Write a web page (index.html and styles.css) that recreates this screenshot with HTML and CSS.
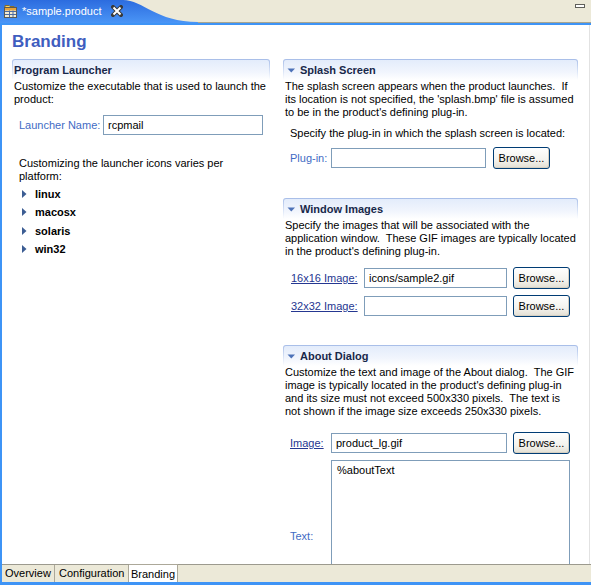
FILE: index.html
```html
<!DOCTYPE html>
<html>
<head>
<meta charset="utf-8">
<link rel="stylesheet" href="styles.css">
</head>
<body>
<div class="tabbar">
  <div class="tab">
    <svg class="tab-shape" width="205" height="23" viewBox="0 0 205 23">
      <defs>
        <linearGradient id="tg" x1="0" y1="0" x2="0" y2="1">
          <stop offset="0" stop-color="#2c6cdf"/>
          <stop offset="1" stop-color="#4a95f6"/>
        </linearGradient>
      </defs>
      <path d="M0 0 H123 C143 0 156 22 198 22 V23 H0 Z" fill="url(#tg)"/>
    </svg>
    <svg class="tab-icon" width="16" height="16" viewBox="0 0 16 16">
      <path d="M2 2.5 H6 L7 3.5 H11 V5 H2 Z" fill="#f7d56a" stroke="#8a6d2a" stroke-width="1"/>
      <rect x="1.5" y="4.5" width="12" height="10" fill="#f3ecd4" stroke="#5b5a55"/>
      <rect x="2" y="5" width="11" height="2.5" fill="#e9a43a"/>
      <path d="M2 8.5 H13 M2 11.5 H13 M6.5 7.5 V14 M10 7.5 V14" stroke="#4c6aa0" stroke-width="1"/>
    </svg>
    <span class="tab-label">*sample.product</span>
    <svg class="tab-close" width="12" height="12" viewBox="0 0 12 12">
      <path d="M2 2 L10 10 M10 2 L2 10" stroke="#3a3a3a" stroke-width="4" stroke-linecap="square"/>
      <path d="M2.5 2.5 L9.5 9.5 M9.5 2.5 L2.5 9.5" stroke="#ffffff" stroke-width="2"/>
    </svg>
  </div>
  <div class="minimize"></div>
</div>
<div class="editor">
  <div class="form">
    <h1 class="form-title">Branding</h1>
    <div class="columns">
      <div class="col col-left">
        <div class="section">
          <div class="sec-head"><div class="sec-head-inner">Program Launcher</div></div>
          <p class="desc">Customize the executable that is used to launch the<br>product:</p>
          <div class="row row-launcher">
            <span class="lbl lbl-launcher">Launcher Name:</span>
            <input class="field f-launcher" type="text" value="rcpmail">
          </div>
          <p class="desc desc-indent">Customizing the launcher icons varies per<br>platform:</p>
          <ul class="tree">
            <li class="tree-item"><svg class="tri-r" width="5" height="8" viewBox="0 0 5 8"><path d="M0 0 L4.5 4 L0 8 Z" fill="#3c5d93"/></svg>linux</li>
            <li class="tree-item"><svg class="tri-r" width="5" height="8" viewBox="0 0 5 8"><path d="M0 0 L4.5 4 L0 8 Z" fill="#3c5d93"/></svg>macosx</li>
            <li class="tree-item"><svg class="tri-r" width="5" height="8" viewBox="0 0 5 8"><path d="M0 0 L4.5 4 L0 8 Z" fill="#3c5d93"/></svg>solaris</li>
            <li class="tree-item"><svg class="tri-r" width="5" height="8" viewBox="0 0 5 8"><path d="M0 0 L4.5 4 L0 8 Z" fill="#3c5d93"/></svg>win32</li>
          </ul>
        </div>
      </div>
      <div class="col col-right">
        <div class="section sec-splash">
          <div class="sec-head"><div class="sec-head-inner"><svg class="tri-d" width="9" height="5" viewBox="0 0 9 5"><path d="M0.5 0.5 H8 L4.25 4.5 Z" fill="#4d72b8"/></svg>Splash Screen</div></div>
          <p class="desc">The splash screen appears when the product launches.&nbsp; If<br>its location is not specified, the 'splash.bmp' file is assumed<br>to be in the product's defining plug-in.</p>
          <p class="desc desc-specify">Specify the plug-in in which the splash screen is located:</p>
          <div class="row row-plugin">
            <span class="lbl lbl-short">Plug-in:</span>
            <input class="field f-plugin" type="text" value="">
            <button class="btn btn-plugin">Browse...</button>
          </div>
        </div>
        <div class="section sec-window">
          <div class="sec-head"><div class="sec-head-inner"><svg class="tri-d" width="9" height="5" viewBox="0 0 9 5"><path d="M0.5 0.5 H8 L4.25 4.5 Z" fill="#4d72b8"/></svg>Window Images</div></div>
          <p class="desc">Specify the images that will be associated with the<br>application window.&nbsp; These GIF images are typically located<br>in the product's defining plug-in.</p>
          <div class="row row-img16">
            <a class="link lbl-wide">16x16 Image:</a>
            <input class="field f-img" type="text" value="icons/sample2.gif">
            <button class="btn">Browse...</button>
          </div>
          <div class="row row-img32">
            <a class="link lbl-wide">32x32 Image:</a>
            <input class="field f-img" type="text" value="">
            <button class="btn">Browse...</button>
          </div>
        </div>
        <div class="section sec-about">
          <div class="sec-head"><div class="sec-head-inner"><svg class="tri-d" width="9" height="5" viewBox="0 0 9 5"><path d="M0.5 0.5 H8 L4.25 4.5 Z" fill="#4d72b8"/></svg>About Dialog</div></div>
          <p class="desc">Customize the text and image of the About dialog.&nbsp; The GIF<br>image is typically located in the product's defining plug-in<br>and its size must not exceed 500x330 pixels.&nbsp; The text is<br>not shown if the image size exceeds 250x330 pixels.</p>
          <div class="row row-image">
            <a class="link lbl-short">Image:</a>
            <input class="field f-about" type="text" value="product_lg.gif">
            <button class="btn">Browse...</button>
          </div>
          <div class="row row-text">
            <span class="lbl lbl-short">Text:</span>
            <textarea class="area">%aboutText</textarea>
          </div>
        </div>
      </div>
    </div>
  </div>
  <div class="pagetabs">
    <div class="ptab pt-overview">Overview</div>
    <div class="ptab pt-config">Configuration</div>
    <div class="ptab pt-branding sel">Branding</div>
  </div>
</div>
</body>
</html>
```

FILE: styles.css
```css
* { box-sizing: border-box; }
html, body { margin: 0; padding: 0; }
body {
  width: 591px;
  height: 585px;
  overflow: hidden;
  background: #ECE9D8;
  font-family: "Liberation Sans", Arial, sans-serif;
  font-size: 11px;
  color: #000;
}

/* top editor tab bar */
.tabbar {
  height: 23px;
  background: #ECE9D8;
  border-bottom: 1px solid #a9a58f;
  display: flex;
}
.tab {
  position: relative;
  width: 200px;
  height: 23px;
  display: flex;
  align-items: center;
  padding-left: 3px;
}
.tab-shape { position: absolute; left: 0; top: 0; }
.tab-icon { position: relative; margin-top: -2px; }
.tab-label {
  position: relative;
  color: #fff;
  margin-left: 3px;
  margin-top: -1px;
}
.tab-close { position: relative; margin-left: 9px; margin-top: -2px; }
.minimize {
  margin-left: auto;
  margin-right: 6px;
  margin-top: 4px;
  width: 10px;
  height: 4px;
  border: 1px solid #5f5f5a;
  background: #fff;
}

/* editor frame */
.editor {
  height: 562px;
  border-top: 2px solid #3e94f6;
  border-left: 2px solid #3e94f6;
  border-bottom: 3px solid #3e94f6;
  background: #fff;
  display: flex;
  flex-direction: column;
}
.form {
  height: 539px;
  overflow: hidden;
  background: #fff;
  padding-left: 10px;
  margin-right: 1px;
  border-right: 1px solid #e2e2e2;
}
.form-title {
  margin: 0;
  padding-top: 7px;
  height: 27px;
  font-size: 17px;
  line-height: 20px;
  font-weight: bold;
  color: #3f5ebf;
}
.columns {
  display: flex;
  gap: 13px;
  margin-top: 7px;
}
.col-left { width: 258px; }
.col-right { width: 295px; }

/* sections */
.sec-head {
  height: 21px;
  padding: 1px 1px 0;
  border-radius: 3px 3px 0 0;
  background: linear-gradient(#a7bde8, #dbe5f7 60%, #ffffff);
}
.sec-head-inner {
  height: 20px;
  border-radius: 2px 2px 0 0;
  background: linear-gradient(#e3ecfb, #f1f5fd 60%, #ffffff);
  display: flex;
  align-items: center;
  padding-left: 1px;
  font-weight: bold;
  color: #18284a;
}
.col-right .sec-head-inner { padding-left: 3px; }
.tri-d { margin-right: 4px; }
.desc {
  margin: 0;
  padding-left: 2px;
  line-height: 13px;
  white-space: nowrap;
}
.desc-indent { padding-left: 7px; margin-top: 21px; }
.desc-specify { padding-left: 7px; margin-top: 8px; }

.row {
  display: flex;
  align-items: center;
  height: 22px;
  padding-left: 7px;
}
.row-launcher { margin-top: 8px; }
.row-plugin { margin-top: 7px; }
.sec-window { margin-top: 29px; }
.row-img16 { margin-top: 9px; padding-left: 8px; }
.row-img32 { margin-top: 6px; padding-left: 8px; }
.sec-about { margin-top: 28px; }
.row-image { margin-top: 14px; }
.row-text { margin-top: 6px; height: 152px; }

.lbl { color: #3f6bc4; }
.link { color: #253791; text-decoration: underline; }
.lbl-launcher { width: 84px; }
.lbl-short { width: 41px; }
.lbl-wide { width: 73px; }

.field {
  height: 20px;
  border: 1px solid #7f9db9;
  background: #fff;
  padding: 0 4px;
  margin: 0;
  font-family: "Liberation Sans", Arial, sans-serif;
  font-size: 11px;
  color: #000;
  outline: none;
}
.f-launcher { width: 160px; }
.f-plugin { width: 155px; }
.f-img { width: 143px; }
.f-about { width: 176px; }

.btn {
  width: 57px;
  height: 22px;
  margin-left: 6px;
  padding: 0;
  border: 1px solid #003c74;
  border-radius: 3px;
  background: linear-gradient(#ffffff, #f4f3ee 60%, #e3dfd3);
  box-shadow: inset -1px -1px 0 #d6d0c2;
  font-family: "Liberation Sans", Arial, sans-serif;
  font-size: 11px;
  color: #000;
}
.btn-plugin { margin-left: 7px; }

.area {
  width: 239px;
  height: 152px;
  border: 1px solid #7f9db9;
  padding: 3px 5px;
  margin: 0;
  resize: none;
  font-family: "Liberation Sans", Arial, sans-serif;
  font-size: 11px;
  line-height: 13px;
  color: #000;
  overflow: hidden;
  outline: none;
}

/* tree */
.tree {
  list-style: none;
  margin: 2px 0 0;
  padding: 0 0 0 10px;
}
.tree-item {
  height: 18.3px;
  display: flex;
  align-items: center;
  font-weight: bold;
}
.tri-r { margin-right: 8px; }

/* bottom page tabs */
.pagetabs {
  height: 18px;
  border-top: 1px solid #9c9a8e;
  background: #ECE9D8;
  display: flex;
}
.ptab {
  height: 17px;
  line-height: 16px;
  border-right: 1px solid #aca899;
  white-space: nowrap;
}
.pt-overview { width: 53px; padding-left: 3px; }
.pt-config { width: 74px; padding-left: 4px; }
.pt-branding { width: 49px; padding-left: 2px; }
.ptab.sel {
  background: #fff;
  margin-top: -1px;
  height: 18px;
  line-height: 18px;
  border-top: 1px solid #aca899;
}
```
